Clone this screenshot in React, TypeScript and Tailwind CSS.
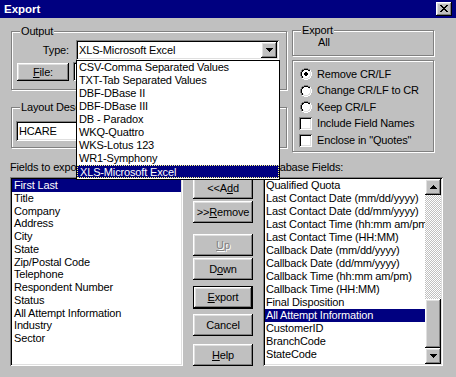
import React from "react";

const RAISED =
  "shadow-[inset_-1px_-1px_0_#000,inset_1px_1px_0_#fff,inset_-2px_-2px_0_#808080,inset_2px_2px_0_#dfdfdf]";
const SUNKEN =
  "shadow-[inset_1px_1px_0_#808080,inset_-1px_-1px_0_#fff,inset_2px_2px_0_#000,inset_-2px_-2px_0_#dfdfdf]";
const ETCHED = "border border-[#808080] shadow-[inset_1px_1px_0_#fff,1px_1px_0_#fff]";

const PALETTE: Record<string, string> = {
  G: "#808080",
  K: "#000000",
  w: "#ffffff",
  W: "#ffffff",
  L: "#dfdfdf",
  X: "#000000",
};

function Pixels({ map }: { map: string[] }) {
  const h = map.length;
  const w = map[0].length;
  return (
    <svg width={w} height={h} viewBox={`0 0 ${w} ${h}`} shapeRendering="crispEdges" className="block">
      {map.flatMap((row, y) =>
        row.split("").map((c, x) =>
          PALETTE[c] ? <rect key={`${x}-${y}`} x={x} y={y} width={1} height={1} fill={PALETTE[c]} /> : null
        )
      )}
    </svg>
  );
}

const RADIO = [
  "....GGGG....",
  "..GGKKKKGG..",
  ".GKKwwwwKKW.",
  ".GKwwwwwwLW.",
  "GKwwwwwwwwLW",
  "GKwwwwwwwwLW",
  "GKwwwwwwwwLW",
  "GKwwwwwwwwLW",
  ".GKwwwwwwLW.",
  ".GKLwwwwLLW.",
  "..WWLLLLWW..",
  "....WWWW....",
];

const RADIO_ON = [
  "....GGGG....",
  "..GGKKKKGG..",
  ".GKKwwwwKKW.",
  ".GKwwwwwwLW.",
  "GKwwwKKwwwLW",
  "GKwwKKKKwwLW",
  "GKwwKKKKwwLW",
  "GKwwwKKwwwLW",
  ".GKwwwwwwLW.",
  ".GKLwwwwLLW.",
  "..WWLLLLWW..",
  "....WWWW....",
];

const CLOSE = ["XX....XX", ".XX..XX.", "..XXXX..", "...XX...", "..XXXX..", ".XX..XX.", "XX....XX"];
const UP = ["...X...", "..XXX..", ".XXXXX.", "XXXXXXX"];
const DOWN = ["XXXXXXX", ".XXXXX.", "..XXX..", "...X..."];

function Group({ label, className, children }: { label?: string; className: string; children?: React.ReactNode }) {
  return (
    <div className={`relative ${ETCHED} ${className}`}>
      {label && (
        <span className="absolute -top-[7px] left-[8px] bg-[#c0c0c0] px-[1px] leading-[13px] whitespace-nowrap">
          {label}
        </span>
      )}
      {children}
    </div>
  );
}

function Btn({
  children,
  className = "",
  isDefault = false,
  disabled = false,
}: {
  children: React.ReactNode;
  className?: string;
  isDefault?: boolean;
  disabled?: boolean;
}) {
  return (
    <div
      className={`flex items-center justify-center bg-[#c0c0c0] leading-[13px] ${
        isDefault ? "border border-black" : ""
      } ${className}`}
    >
      <div
        className={`w-full h-full flex items-center justify-center ${RAISED} ${
          disabled ? "text-[#808080] [text-shadow:1px_1px_0_#fff]" : "text-black"
        }`}
      >
        {children}
      </div>
    </div>
  );
}

function Radio({ on, label }: { on?: boolean; label: string }) {
  return (
    <div className="h-[16.5px] flex items-center">
      <div className="w-[13px] flex justify-center">
        <Pixels map={on ? RADIO_ON : RADIO} />
      </div>
      <span className="ml-[5px] leading-[13px] whitespace-nowrap">{label}</span>
    </div>
  );
}

function Check({ label }: { label: string }) {
  return (
    <div className="h-[16.5px] flex items-center">
      <div className={`w-[13px] h-[13px] bg-white ${SUNKEN}`} />
      <span className="ml-[5px] leading-[13px] whitespace-nowrap">{label}</span>
    </div>
  );
}

const leftItems = [
  "First Last",
  "Title",
  "Company",
  "Address",
  "City",
  "State",
  "Zip/Postal Code",
  "Telephone",
  "Respondent Number",
  "Status",
  "All Attempt Information",
  "Industry",
  "Sector",
];

const rightItems = [
  "Qualified Quota",
  "Last Contact Date (mm/dd/yyyy)",
  "Last Contact Date (dd/mm/yyyy)",
  "Last Contact Time (hh:mm am/pm)",
  "Last Contact Time (HH:MM)",
  "Callback Date (mm/dd/yyyy)",
  "Callback Date (dd/mm/yyyy)",
  "Callback Time (hh:mm am/pm)",
  "Callback Time (HH:MM)",
  "Final Disposition",
  "All Attempt Information",
  "CustomerID",
  "BranchCode",
  "StateCode",
];

const types = [
  "CSV-Comma Separated Values",
  "TXT-Tab Separated Values",
  "DBF-DBase II",
  "DBF-DBase III",
  "DB - Paradox",
  "WKQ-Quattro",
  "WKS-Lotus 123",
  "WR1-Symphony",
  "XLS-Microsoft Excel",
];

export default function App() {
  return (
    <div className="relative w-[456px] h-[377px] overflow-hidden bg-[#c0c0c0] text-black text-[11px] tracking-[-0.15px] leading-[13px] font-['Liberation_Sans',Arial,sans-serif]">
      {/* Title bar */}
      <div className="h-[18px] bg-[#000080] flex items-center justify-between pl-[4px] pr-[4px]">
        <span className="text-white font-bold text-[11.5px] tracking-normal leading-[13px]">Export</span>
        <div className={`w-[16px] h-[14px] bg-[#c0c0c0] ${RAISED} flex items-center justify-center pb-[1px] pr-[1px]`}>
          <Pixels map={CLOSE} />
        </div>
      </div>

      {/* Top section */}
      <div className="flex">
        <div className="ml-[11px] w-[276px]">
          <Group label="Output" className="mt-[13px] h-[59px]">
            <div className="pl-[5px] pt-[8px]">
              <div className="flex items-center">
                <span className="w-[52px] text-right">Type:</span>
                <div className={`ml-[7px] w-[203px] h-[20px] bg-white ${SUNKEN} flex items-center pl-[3px] pr-[2px]`}>
                  <span className="flex-1 whitespace-nowrap">XLS-Microsoft Excel</span>
                  <div className={`w-[16px] h-[16px] bg-[#c0c0c0] ${RAISED} flex items-center justify-center`}>
                    <Pixels map={DOWN} />
                  </div>
                </div>
              </div>
              <div className="flex items-start mt-[3px]">
                <Btn className="w-[52px] h-[18px]">
                  <span>
                    <span className="underline">F</span>ile:
                  </span>
                </Btn>
                <div className={`ml-[4px] -mt-[1px] w-[206px] h-[19px] bg-white ${SUNKEN}`} />
              </div>
            </div>
          </Group>
          <Group label="Layout Description" className="mt-[17px] h-[41px]">
            <div className="pl-[4px] pt-[13px]">
              <div className={`w-[262px] h-[20px] bg-white ${SUNKEN} flex items-center pl-[3px]`}>HCARE</div>
            </div>
          </Group>
        </div>

        <div className="ml-[5px] w-[142px]">
          <Group label="Export" className="mt-[12px] h-[26px]">
            <div className="pl-[25px] pt-[5px]">All</div>
          </Group>
          <Group className="mt-[4px] h-[92px]">
            <div className="pl-[6px] pt-[5px]">
              <Radio on label="Remove CR/LF" />
              <Radio label="Change CR/LF to CR" />
              <Radio label="Keep CR/LF" />
              <Check label="Include Field Names" />
              <Check label={'Enclose in "Quotes"'} />
            </div>
          </Group>
        </div>
      </div>

      {/* Bottom section */}
      <div className="mt-[9px] flex pl-[10px]">
        <div className="w-[173px]">
          <div className="h-[13px] whitespace-nowrap">Fields to export:</div>
          <div className={`mt-[3px] h-[189px] bg-white p-[2px] ${SUNKEN}`}>
            {leftItems.map((t, i) => (
              <div
                key={t}
                className={`h-[12.75px] leading-[13px] pl-[2px] whitespace-nowrap ${
                  i === 0 ? "bg-[#000080] text-white" : ""
                }`}
              >
                {t}
              </div>
            ))}
          </div>
        </div>

        <div className="ml-[10px] w-[60px] pt-[16px] flex flex-col">
          <Btn className="h-[22px]">
            <span>
              &lt;&lt;A<span className="underline">d</span>d
            </span>
          </Btn>
          <Btn className="h-[22px] mt-[2px]">
            <span>
              &gt;&gt;<span className="underline">R</span>emove
            </span>
          </Btn>
          <Btn className="h-[22px] mt-[11px]" disabled>
            <span>
              <span className="underline">U</span>p
            </span>
          </Btn>
          <Btn className="h-[22px] mt-[2px]">
            <span>
              D<span className="underline">o</span>wn
            </span>
          </Btn>
          <Btn className="h-[23px] mt-[6px]" isDefault>
            <span>
              <span className="underline">E</span>xport
            </span>
          </Btn>
          <Btn className="h-[22px] mt-[5px]">Cancel</Btn>
          <Btn className="h-[22px] mt-[8px]">
            <span>
              <span className="underline">H</span>elp
            </span>
          </Btn>
        </div>

        <div className="ml-[10px] w-[180px]">
          <div className="h-[13px] whitespace-nowrap">Database Fields:</div>
          <div className={`mt-[3px] h-[189px] bg-white p-[2px] flex ${SUNKEN}`}>
            <div className="flex-1 overflow-hidden">
              {rightItems.map((t, i) => (
                <div
                  key={t}
                  className={`h-[13px] leading-[13px] pl-[1px] whitespace-nowrap ${
                    i === 10 ? "bg-[#000080] text-white" : ""
                  }`}
                >
                  {t}
                </div>
              ))}
            </div>
            <div className="w-[16px] flex flex-col">
              <div className={`h-[16px] bg-[#c0c0c0] ${RAISED} flex items-center justify-center`}>
                <Pixels map={UP} />
              </div>
              <div className="flex-1 bg-[image:repeating-conic-gradient(#c0c0c0_0_25%,#fff_0_50%)] bg-[length:2px_2px]" />
              <div className={`h-[49px] bg-[#c0c0c0] ${RAISED}`} />
              <div className={`h-[16px] bg-[#c0c0c0] ${RAISED} flex items-center justify-center`}>
                <Pixels map={DOWN} />
              </div>
            </div>
          </div>
        </div>
      </div>

      {/* Open dropdown list */}
      <div className="absolute left-[76px] top-[60px] w-[204px] h-[120px] bg-white border border-black">
        {types.map((t, i) => (
          <div
            key={t}
            className={`h-[13px] leading-[13px] pl-[2px] whitespace-nowrap ${
              i === types.length - 1 ? "bg-[#000080] text-white border border-dotted border-[#ffff80] pl-[1px] leading-[11px]" : ""
            }`}
          >
            {t}
          </div>
        ))}
      </div>
    </div>
  );
}
